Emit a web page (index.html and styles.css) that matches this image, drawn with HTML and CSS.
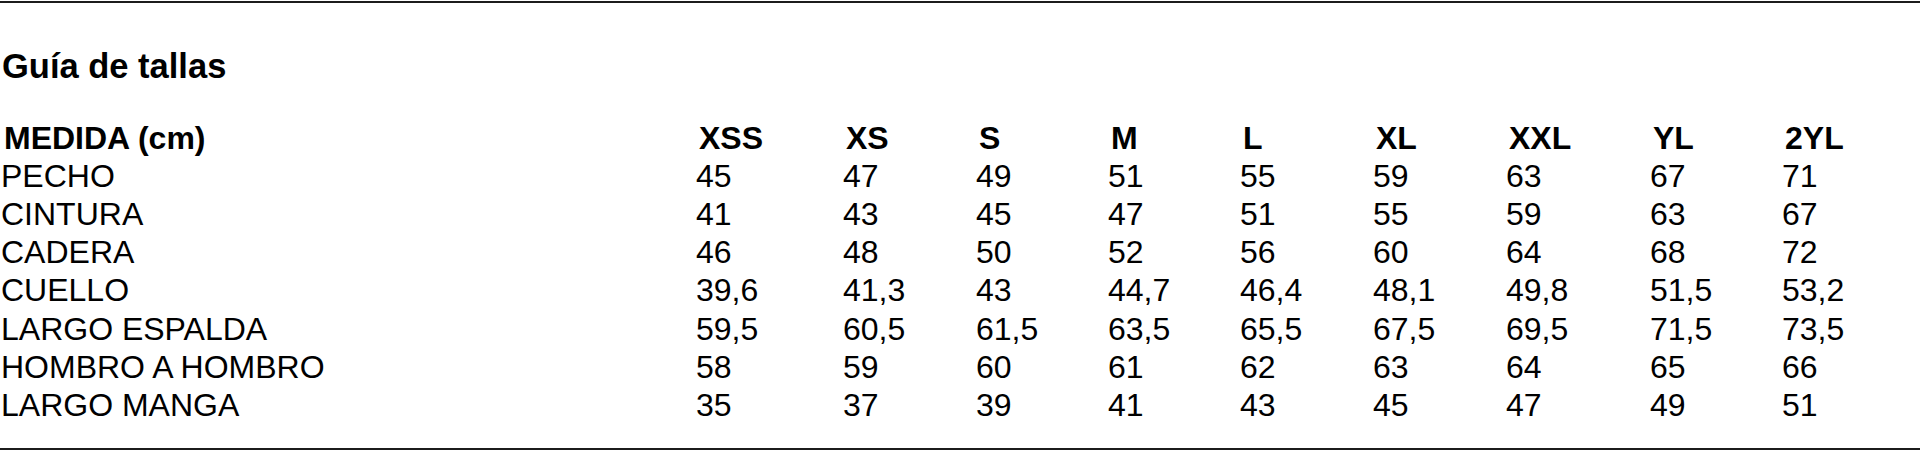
FILE: index.html
```html
<!DOCTYPE html>
<html lang="es">
<head>
<meta charset="utf-8">
<title>Guía de tallas</title>
<link rel="stylesheet" href="styles.css">
</head>
<body>
<section class="guide">
  <h2 class="guide-title">Guía de tallas</h2>
  <table class="sizes">
    <colgroup>
      <col class="c-label"><col class="c-xss"><col class="c-xs"><col class="c-s"><col class="c-m"><col class="c-l"><col class="c-xl"><col class="c-xxl"><col class="c-yl"><col class="c-2yl">
    </colgroup>
    <thead>
      <tr><th>MEDIDA (cm)</th><th>XSS</th><th>XS</th><th>S</th><th>M</th><th>L</th><th>XL</th><th>XXL</th><th>YL</th><th>2YL</th></tr>
    </thead>
    <tbody>
      <tr><td>PECHO</td><td>45</td><td>47</td><td>49</td><td>51</td><td>55</td><td>59</td><td>63</td><td>67</td><td>71</td></tr>
      <tr><td>CINTURA</td><td>41</td><td>43</td><td>45</td><td>47</td><td>51</td><td>55</td><td>59</td><td>63</td><td>67</td></tr>
      <tr><td>CADERA</td><td>46</td><td>48</td><td>50</td><td>52</td><td>56</td><td>60</td><td>64</td><td>68</td><td>72</td></tr>
      <tr><td>CUELLO</td><td>39,6</td><td>41,3</td><td>43</td><td>44,7</td><td>46,4</td><td>48,1</td><td>49,8</td><td>51,5</td><td>53,2</td></tr>
      <tr><td>LARGO ESPALDA</td><td>59,5</td><td>60,5</td><td>61,5</td><td>63,5</td><td>65,5</td><td>67,5</td><td>69,5</td><td>71,5</td><td>73,5</td></tr>
      <tr><td>HOMBRO A HOMBRO</td><td>58</td><td>59</td><td>60</td><td>61</td><td>62</td><td>63</td><td>64</td><td>65</td><td>66</td></tr>
      <tr><td>LARGO MANGA</td><td>35</td><td>37</td><td>39</td><td>41</td><td>43</td><td>45</td><td>47</td><td>49</td><td>51</td></tr>
    </tbody>
  </table>
</section>
</body>
</html>
```
FILE: styles.css
```css
html, body {
  margin: 0;
  padding: 0;
  background: #fff;
}
body {
  font-family: "Liberation Sans", Arial, sans-serif;
  color: #000;
}
.guide {
  margin-top: 1px;
  border-top: 2px solid #1c1c1c;
  border-bottom: 2px solid #1c1c1c;
  padding: 44px 0 24px 0;
}
.guide-title {
  margin: 0 0 32px 0;
  padding-left: 2px;
  font-size: 34.5px;
  font-weight: 700;
  line-height: 39.6px;
}
.sizes {
  width: 100%;
  table-layout: fixed;
  border-collapse: collapse;
  font-size: 32px;
  line-height: 38.2px;
}
.sizes th,
.sizes td {
  padding: 0 0 0 1px;
  text-align: left;
  white-space: nowrap;
  vertical-align: top;
}
.sizes th {
  font-weight: 700;
  padding-left: 4px;
}
.c-label { width: 695px; }
.c-xss { width: 147px; }
.c-xs { width: 133px; }
.c-s { width: 132px; }
.c-m { width: 132px; }
.c-l { width: 133px; }
.c-xl { width: 133px; }
.c-xxl { width: 144px; }
.c-yl { width: 132px; }
.c-2yl { width: 139px; }
```
